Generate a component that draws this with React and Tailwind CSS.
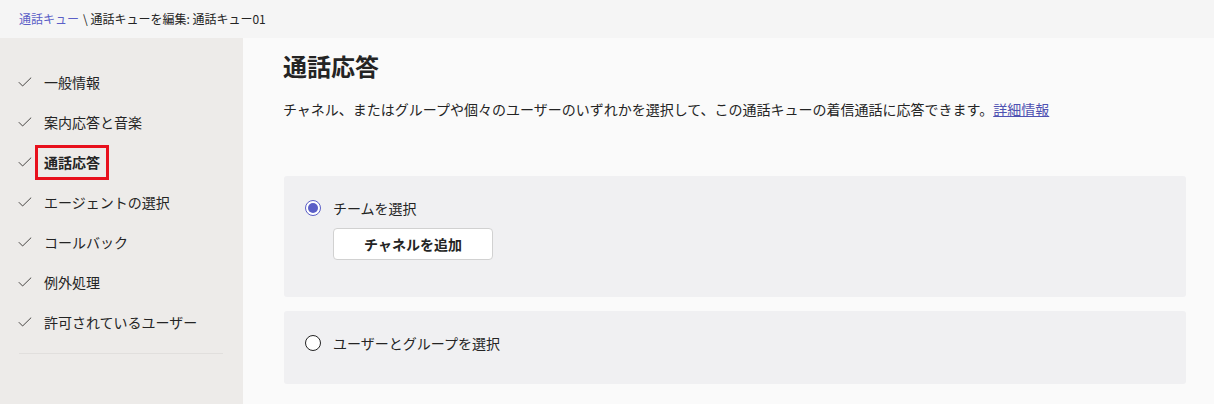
import React from "react";

const steps = [
  "一般情報",
  "案内応答と音楽",
  "通話応答",
  "エージェントの選択",
  "コールバック",
  "例外処理",
  "許可されているユーザー",
];

const Check = () => (
  <svg width="14" height="10" viewBox="0 0 14 10" className="shrink-0">
    <path d="M0.8 5.2 L4.6 9 L13.2 0.6" fill="none" stroke="#484644" strokeWidth="1" />
  </svg>
);

const Radio = ({ checked }) =>
  checked ? (
    <span className="w-4 h-4 rounded-full border border-[#5b5fc7] flex items-center justify-center bg-white shrink-0">
      <span className="w-[10px] h-[10px] rounded-full bg-[#5b5fc7]" />
    </span>
  ) : (
    <span className="w-4 h-4 rounded-full border-[1.5px] border-[#242424] bg-white shrink-0" />
  );

export default function App() {
  return (
    <div
      className="w-[1214px] h-[404px] overflow-hidden flex flex-col bg-[#fafafa] text-[#242424]"
      style={{ fontFamily: '"Noto Sans CJK JP", "Noto Sans", sans-serif' }}
    >
      <div className="h-[38px] shrink-0 bg-[#f5f5f5] flex items-center pl-[19px] text-[12px]">
        <span className="text-[#5b5fc7]">通話キュー</span>
        <span className="ml-1">\ 通話キューを編集: 通話キュー01</span>
      </div>

      <div className="flex flex-1 min-h-0">
        <aside className="w-[243px] shrink-0 bg-[#edebe9] pt-6">
          {steps.map((s, i) => (
            <div key={s} className="h-10 flex items-center pl-[18px] text-[14px]">
              <Check />
              {i === 2 ? (
                <span className="ml-[3px] border-[3px] border-[#e8101c] px-[6px] h-[35px] flex items-center font-bold">
                  {s}
                </span>
              ) : (
                <span className="ml-3">{s}</span>
              )}
            </div>
          ))}
          <div className="ml-[19px] mt-[11px] w-[204px] h-px bg-[#e1dfdd]" />
        </aside>

        <main className="flex-1 pl-[40px] pr-[28px] pt-[12px]">
          <h1 className="text-[24px] leading-8 font-bold">通話応答</h1>
          <p className="mt-[17px] text-[14px] leading-5">
            チャネル、またはグループや個々のユーザーのいずれかを選択して、この通話キューの着信通話に応答できます。
            <a href="#" className="text-[#4f52b2] underline">詳細情報</a>
          </p>

          <div className="mt-[57px] ml-px bg-[#f0f0f2] rounded-[3px] h-[121px] pl-[21px] pt-6">
            <div className="flex items-center gap-3 h-4 text-[14px]">
              <Radio checked />
              <span>チームを選択</span>
            </div>
            <button className="mt-[12px] ml-[28px] w-[160px] h-[32px] bg-white border border-[#d1d1d1] rounded-[4px] text-[14px] font-bold">
              チャネルを追加
            </button>
          </div>

          <div className="mt-[14px] ml-px bg-[#f0f0f2] rounded-[3px] h-[73px] pl-[21px] pt-6">
            <div className="flex items-center gap-3 h-4 text-[14px]">
              <Radio />
              <span>ユーザーとグループを選択</span>
            </div>
          </div>
        </main>
      </div>
    </div>
  );
}
